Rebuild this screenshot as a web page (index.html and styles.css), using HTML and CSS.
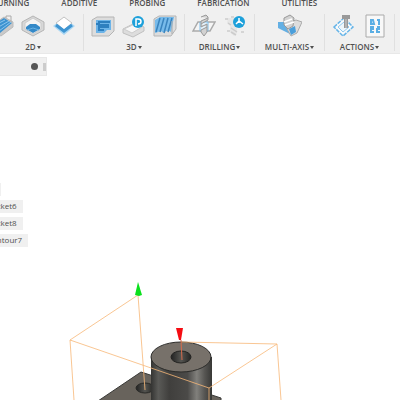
FILE: index.html
```html
<!DOCTYPE html>
<html lang="en">
<head>
  <meta charset="UTF-8" />
  <title>CAM Workspace</title>
  <link rel="stylesheet" href="styles.css">
</head>
<body>

  <header class="toolbar">
    <nav class="tabs">
      <button class="tab">TURNING</button>
      <button class="tab">ADDITIVE</button>
      <button class="tab">PROBING</button>
      <button class="tab">FABRICATION</button>
      <button class="tab">UTILITIES</button>
    </nav>

    <div class="groups">
      <div class="group">
        <div class="tools">
          <button class="tool" aria-label="Adaptive clearing">
            <svg viewBox="0 0 24 24">
              <path d="M1 12L14 3l9 5v5L11 22 1 17z" fill="#c9c9c9" stroke="#bbb"/>
              <path d="M1 12L14 4l8 5-12 10-9-4z" fill="#3c92d0"/>
              <path d="M3 12l12-6M5 15l14-8M9 17l12-9" stroke="#8cc5ec"/>
              <path d="M16 4V2h5v6" fill="none" stroke="#aaa"/>
            </svg>
          </button>
          <button class="tool" aria-label="Pocket">
            <svg viewBox="0 0 24 24">
              <path d="M1 8L12 2l11 6v8l-11 6L1 16z" fill="#d8d8d8" stroke="#b5b5b5"/>
              <path d="M4 9l8-5 8 5v6l-8 5-8-5z" fill="#f4f4f4" stroke="#ccc"/>
              <path d="M5 13l4-3h6l4 3v2l-7 4-7-4z" fill="#3489c8"/>
              <path d="M6 16l6-2 6 2" fill="none" stroke="#68b2e5"/>
            </svg>
          </button>
          <button class="tool" aria-label="Contour">
            <svg viewBox="0 0 24 24">
              <path d="M1 12l4-3 7 6 7-6 4 3-11 9z" fill="#a9d6f3"/>
              <path d="M4 9l8-6 8 6-8 7z" fill="#fff" stroke="#c2c2c2"/>
              <path d="M4 11l8 6 8-6" fill="none" stroke="#3f95d2" stroke-width="3"/>
            </svg>
          </button>
        </div>
        <button class="group-label">2D <i class="arrow"></i></button>
      </div>

      <div class="group">
        <div class="tools">
          <button class="tool" aria-label="Adaptive 3D">
            <svg viewBox="0 0 24 24">
              <path d="M1 6l5-3h17v14l-5 5H1z" fill="#ddd" stroke="#b5b5b5"/>
              <path d="M5 6h15v10h-4l-3 3H5z" fill="#6db4e8"/>
              <path d="M19 8H8v3h9v2H8v3h5M5 10h3" fill="none" stroke="#2d7fbf" stroke-width="2"/>
            </svg>
          </button>
          <button class="tool" aria-label="Pocket clearing">
            <svg viewBox="0 0 24 24">
              <path d="M1 15L13 9l9 4v4l-11 6-10-4z" fill="#ddd" stroke="#c0c0c0"/>
              <path d="M2 15l11-5 7 3-10 6z" fill="#f7f7f7" stroke="#ccc"/>
              <circle cx="16" cy="8" r="6" fill="#1da0da"/>
              <path d="M14 12V5h2c4 0 4 5 0 5" fill="none" stroke="#fff" stroke-width="1.5"/>
            </svg>
          </button>
          <button class="tool" aria-label="Parallel">
            <svg viewBox="0 0 24 24">
              <path d="M1 5l5-3h17v13l-5 7H1z" fill="#ddd" stroke="#b5b5b5"/>
              <path d="M2 6l5-3h14l-3 15c-4-4-7 3-10-1l-6 2z" fill="#78bbea"/>
              <path d="M3 18L7 4M7 18l4-14M11 19l4-15M15 18l4-14" stroke="#3a84be" stroke-width="1.5"/>
              <path d="M19 7v13" stroke="#aaa"/>
            </svg>
          </button>
        </div>
        <button class="group-label">3D <i class="arrow"></i></button>
      </div>

      <div class="group">
        <div class="tools">
          <button class="tool" aria-label="Drill">
            <svg viewBox="0 0 24 24">
              <path d="M1 17L6 8h17l-5 9z" fill="#f5f5f5" stroke="#aaa" stroke-width="1.5"/>
              <path d="M8 8h8v9H8z" fill="#e4f1fa" stroke="#7dbdea"/>
              <path d="M9 3l5-2 2 2v3l-7 4V7l7-3M9 10v3l6-3v8l-3 4-3-4v-2l6-3" fill="#d2d2d2" stroke="#999"/>
            </svg>
          </button>
          <button class="tool" aria-label="Hole recognition">
            <svg viewBox="0 0 24 24">
              <path d="M5 4h11v5l-2 3v7l-3 3-4-4v-6L4 9z" fill="#e6e6e6"/>
              <path d="M2 5h3M8 3h3M5 9l3 2M4 17h3M8 14l6 4M8 18l5 3M18 18h3" stroke="#ccc" stroke-width="1.5"/>
              <circle cx="16" cy="8" r="6" fill="#1da0da"/>
              <path d="M16 4v5M13 10l3-3 4 3" fill="none" stroke="#fff" stroke-width="1.5"/>
            </svg>
          </button>
        </div>
        <button class="group-label">DRILLING <i class="arrow"></i></button>
      </div>

      <div class="group">
        <div class="tools">
          <button class="tool" aria-label="Swarf">
            <svg viewBox="0 0 24 24">
              <path d="M0 8h7l5 7v5l-6-3-6-3z" fill="#64b0e4"/>
              <path d="M9 9l9-3 6 2-5 11-6 3-4-7z" fill="#ddd" stroke="#aaa"/>
              <path d="M11 15l6-3 1 6-5 3z" fill="#4a9eda"/>
              <path d="M6 4l6-3 4 3-1 8-5 3-4-4z" fill="#d2d2d2" stroke="#999"/>
              <path d="M6 8l8-3M7 11l9-3" stroke="#fff" stroke-width="1.5"/>
            </svg>
          </button>
        </div>
        <button class="group-label">MULTI-AXIS <i class="arrow"></i></button>
      </div>

      <div class="group">
        <div class="tools">
          <button class="tool" aria-label="Simulate">
            <svg viewBox="0 0 24 24">
              <path d="M2 13L12 4l9 9-10 9z" fill="#fafafa" stroke="#65b4e8" stroke-width="1.5" stroke-dasharray="4 1"/>
              <path d="M6 13l6-5 5 5-6 5z" fill="#eef6fb" stroke="#8fc8ee"/>
              <path d="M10 1h8v4h-2v9h-4V5h-2z" fill="#999"/>
              <path d="M14 5v9" stroke="#ccc"/>
            </svg>
          </button>
          <button class="tool" aria-label="Post process">
            <svg viewBox="0 0 24 24">
              <path d="M3 1h18v22H3z" fill="#f8f8f8" stroke="#aaa"/>
              <path d="M10 6H8v4h3zM14 6h2v5M7 13h3v2H8v3h3M14 13h2v2h-2v3h3" fill="none" stroke="#5aaee4" stroke-width="2"/>
            </svg>
          </button>
        </div>
        <button class="group-label">ACTIONS <i class="arrow"></i></button>
      </div>
    </div>
  </header>

  <main class="viewport">
    <svg class="scene" viewBox="0 54 400 346" preserveAspectRatio="xMinYMin slice">
      <defs>
        <linearGradient id="side">
          <stop offset="0" stop-color="#343432"/>
          <stop offset=".12" stop-color="#5a5a57"/>
          <stop offset=".3" stop-color="#403f3d"/>
          <stop offset=".6" stop-color="#4b4a48"/>
          <stop offset=".75" stop-color="#81807c"/>
          <stop offset=".88" stop-color="#565552"/>
          <stop offset="1" stop-color="#383836"/>
        </linearGradient>
        <linearGradient id="bore">
          <stop offset="0" stop-color="#222"/>
          <stop offset=".5" stop-color="#555551"/>
          <stop offset="1" stop-color="#252523"/>
        </linearGradient>
      </defs>

      <!-- base plate -->
      <path d="M98 401l43-29 80 26v3z" fill="#68635c" stroke="#3a3a38"/>
      <ellipse cx="145" cy="388" rx="9" ry="5" fill="url(#bore)" stroke="#292927"/>

      <!-- boss -->
      <path d="M151 357v44h61v-44z" fill="url(#side)"/>
      <ellipse cx="181" cy="357" rx="30" ry="15" fill="#77716a" stroke="#2c2c2a"/>
      <ellipse cx="181" cy="357" rx="10" ry="6" fill="url(#bore)" stroke="#242422"/>

      <!-- stock outline -->
      <path class="stock" d="M138 295L70 340l139 48 68-44-96-2M138 295l7 95M70 340l4 60M209 388v12M277 344l4 56"/>
      <path d="M181 340l1 20" stroke="#d56a4b"/>

      <!-- axis arrows -->
      <path d="M138 282l4 13-3 1-4-1z" fill="#0be01d"/>
      <path d="M176 328h7l-2 12h-2z" fill="#f50c12"/>
    </svg>

    <div class="browser-bar">
      <button class="pin" aria-label="Pin browser"></button>
      <span class="grip"></span>
    </div>

    <ul class="operations">
      <li class="operation"></li>
      <li class="operation">Pocket6</li>
      <li class="operation">Pocket8</li>
      <li class="operation">Contour7</li>
    </ul>
  </main>

</body>
</html>
```
FILE: styles.css
```css
* {
  box-sizing: border-box;
}

body {
  margin: 0;
  min-height: 100vh;
  display: flex;
  flex-direction: column;
  background-color: #fff;
  color: #505050;
  font-family: "Open Sans", sans-serif;
  font-size: 8px;
  line-height: 8px;
  overflow: hidden;
}

button {
  border: 0;
  padding: 0;
  background: none;
  color: inherit;
  font: inherit;
}

/* Toolbar */
.toolbar {
  background-color: #f0f0f0;
  border-bottom: 1px solid #e8e8e8;
}

.tabs {
  display: flex;
  gap: 32px;
  margin-left: -7px;
}

.tab {
  font-weight: 600;
  line-height: 6px;
  white-space: nowrap;
}

.groups {
  display: flex;
  margin-left: -17px;
  padding: 8px 0 2px;
}

.group {
  display: flex;
  flex-direction: column;
  align-items: center;
  flex: none;
  gap: 5px;
  min-width: 70px;
  padding: 0 7px;
  border-right: 1px solid #e0e0e0;
}

.tools {
  display: flex;
  gap: 7px;
}

.tool {
  width: 24px;
  height: 24px;
}

.tool svg {
  display: block;
  width: 24px;
  height: 24px;
}

.group-label {
  display: flex;
  align-items: center;
  gap: 1px;
  font-weight: 600;
  white-space: nowrap;
}

.arrow {
  border: 2px solid transparent;
  border-top: 3px solid #505050;
  border-bottom: 0;
}

/* Canvas */
.viewport {
  position: relative;
  flex: 1;
  padding-top: 3px;
}

.scene {
  position: absolute;
  top: 0;
  left: 0;
  width: 100%;
  height: 100%;
}

.stock {
  fill: none;
  stroke: #f8b878;
  stroke-opacity: 0.8;
}

.browser-bar {
  position: relative;
  display: flex;
  align-items: center;
  justify-content: flex-end;
  gap: 5px;
  width: 47px;
  height: 19px;
  background-color: #f0f0f0;
  border: 1px solid #e8e8e8;
  border-left: 0;
}

.pin {
  width: 7px;
  height: 7px;
  border-radius: 50%;
  background-color: #555;
}

.grip {
  width: 3px;
  height: 8px;
  background-color: #ccc;
}

.operations {
  position: relative;
  display: flex;
  flex-direction: column;
  align-items: flex-start;
  gap: 4px;
  margin: 107px 0 0 -18px;
  padding: 0;
  list-style: none;
}

.operation {
  min-width: 19px;
  min-height: 13px;
  padding: 2px 6px 3px 5px;
  background-color: #f0f0f0;
  white-space: nowrap;
}
```
